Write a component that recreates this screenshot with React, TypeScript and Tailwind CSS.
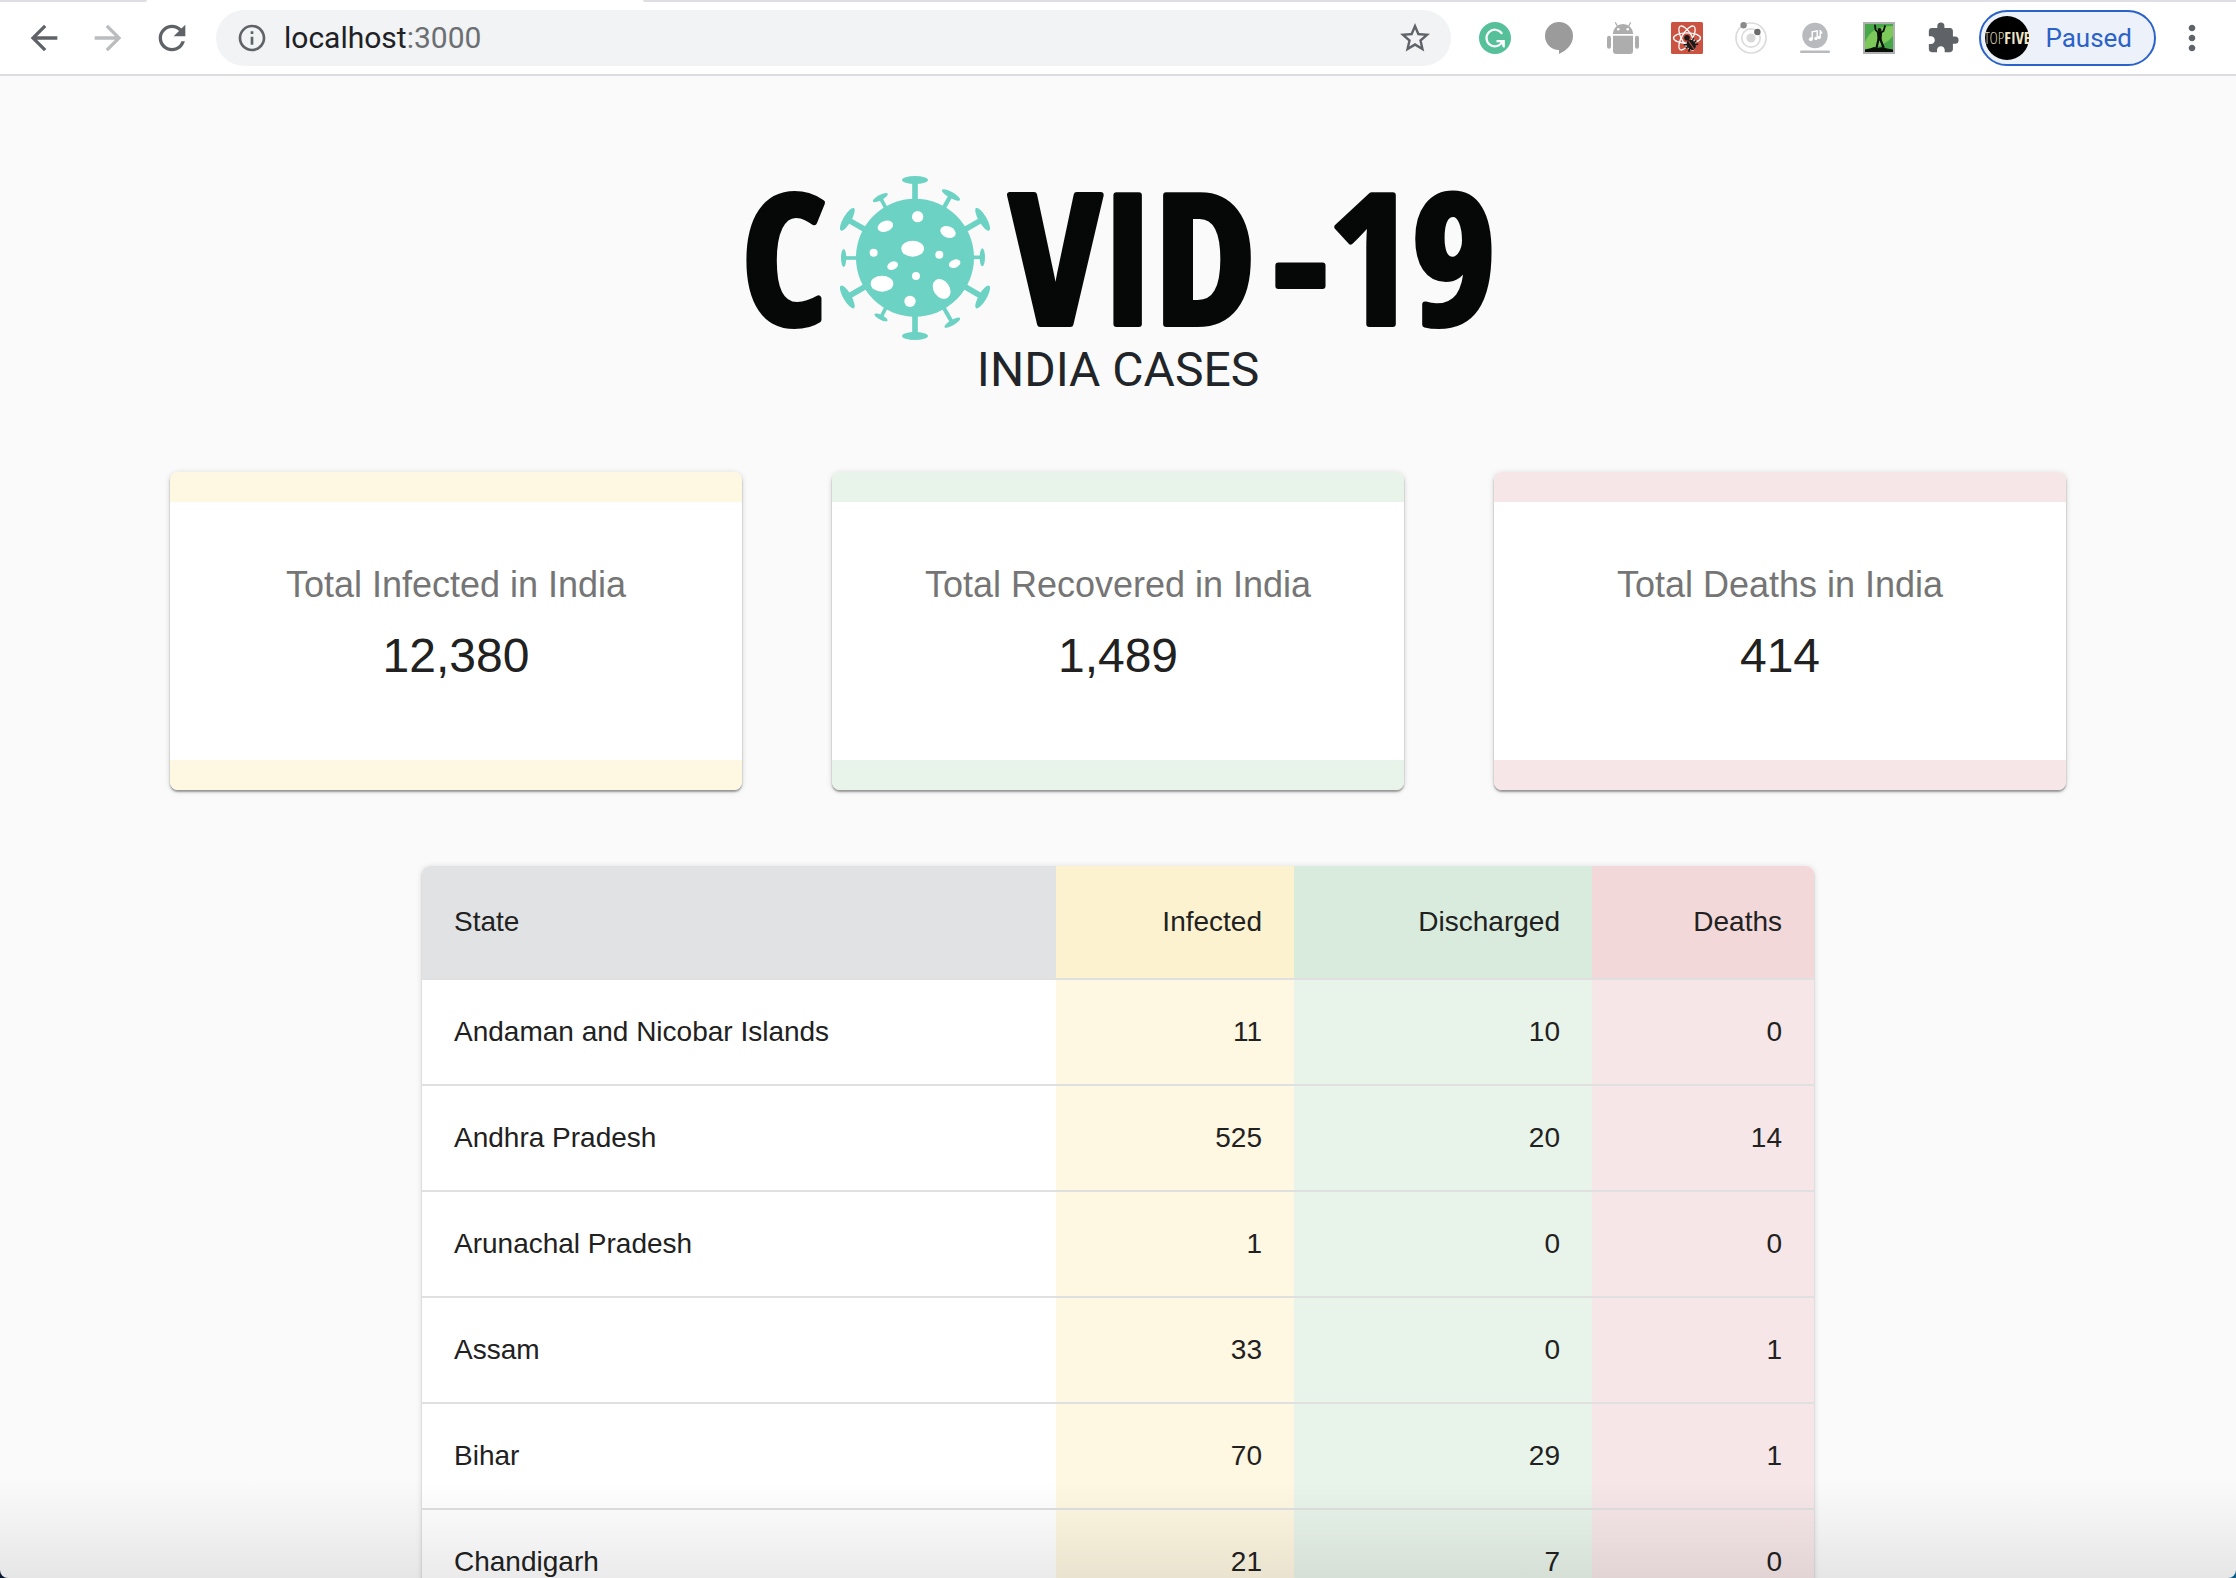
import type { ReactNode } from "react";
import {
  MdArrowBack,
  MdArrowForward,
  MdExtension,
  MdInfoOutline,
  MdMoreVert,
  MdRefresh,
  MdStarBorder,
} from "react-icons/md";

type Tone = { title: string; value: string; bar: string };

const totals: Tone[] = [
  { title: "Total Infected in India", value: "12,380", bar: "bg-[#fef7e1]" },
  { title: "Total Recovered in India", value: "1,489", bar: "bg-[#e8f3e9]" },
  { title: "Total Deaths in India", value: "414", bar: "bg-[#f6e6e7]" },
];

const rows = [
  { state: "Andaman and Nicobar Islands", infected: 11, discharged: 10, deaths: 0 },
  { state: "Andhra Pradesh", infected: 525, discharged: 20, deaths: 14 },
  { state: "Arunachal Pradesh", infected: 1, discharged: 0, deaths: 0 },
  { state: "Assam", infected: 33, discharged: 0, deaths: 1 },
  { state: "Bihar", infected: 70, discharged: 29, deaths: 1 },
  { state: "Chandigarh", infected: 21, discharged: 7, deaths: 0 },
];

function GrammarlyIcon() {
  return (
    <svg viewBox="0 0 32 32" className="size-8">
      <circle cx="16" cy="16" r="16" fill="#56c09a" />
      <path
        d="M22.6 11.2A8.3 8.3 0 1 0 23.4 19.4"
        fill="none"
        stroke="#fff"
        strokeWidth="2.2"
        strokeLinecap="round"
      />
      <path d="M17.5 19.2h7.2v6" fill="none" stroke="#fff" strokeWidth="2.2" />
      <path d="M25.2 18.6v7.4l-3.4-5z" fill="#fff" />
    </svg>
  );
}

function ChatIcon() {
  return (
    <svg viewBox="0 0 32 32" className="size-8">
      <path
        d="M16 0a14 14 0 0 1 14 14c0 8.500-6.500 14.500-14 18v-4A14 14 0 0 1 16 0z"
        fill="#9b9b9b"
      />
    </svg>
  );
}

function AndroidIcon() {
  return (
    <svg viewBox="0 0 32 32" className="size-8" fill="#adadad">
      <path d="M5.800 12a10.200 10 0 0 1 20.400 0z" />
      <path d="M8.500.8l2.200 4M23.500.8l-2.200 4" stroke="#adadad" strokeWidth="1.300" strokeLinecap="round" />
      <circle cx="11.300" cy="7.200" r="1.300" fill="#fff" />
      <circle cx="20.700" cy="7.200" r="1.300" fill="#fff" />
      <path d="M6 13.800h20V29a3 3 0 0 1-3 3H9a3 3 0 0 1-3-3z" />
      <rect x="0" y="13.800" width="4" height="13" rx="2" />
      <rect x="28" y="13.800" width="4" height="13" rx="2" />
    </svg>
  );
}

function ReactBugIcon() {
  return (
    <svg viewBox="0 0 32 32" className="size-8">
      <rect width="32" height="32" rx="1.500" fill="#cb5341" />
      <g fill="none" stroke="#fff" strokeWidth="1.300">
        <ellipse cx="16" cy="16" rx="13.500" ry="5.200" />
        <ellipse cx="16" cy="16" rx="13.500" ry="5.200" transform="rotate(60 16 16)" />
        <ellipse cx="16" cy="16" rx="13.500" ry="5.200" transform="rotate(120 16 16)" />
      </g>
      <circle cx="16" cy="15.800" r="2.800" fill="#1a1a1a" />
      <g transform="rotate(-35 20 22.500)">
        <path d="M14 18.500l12 8M13.500 22.500h13M14 27l12-8.500" stroke="#1a1a1a" strokeWidth="1.500" />
        <ellipse cx="20" cy="23" rx="4.200" ry="5.500" fill="#1a1a1a" />
        <path d="M20 18.500v10" stroke="#cb5341" strokeWidth="1" />
      </g>
    </svg>
  );
}

function OrbitIcon() {
  return (
    <svg viewBox="0 0 32 32" className="size-8">
      <g fill="none" stroke="#dcdcdc">
        <circle cx="16" cy="16" r="15" strokeWidth="1.700" />
        <circle cx="16" cy="16" r="9.200" strokeWidth="1.700" />
      </g>
      <circle cx="16" cy="16" r="4.600" fill="#d9d9d9" />
      <circle cx="8.600" cy="3.200" r="3.200" fill="#8a8a8a" />
      <circle cx="22.400" cy="10" r="3.200" fill="#6b6b6b" />
    </svg>
  );
}

function MusicIcon() {
  return (
    <svg viewBox="0 0 32 32" className="size-8">
      <circle cx="16" cy="13.500" r="12.700" fill="#b9babd" />
      <rect x="1" y="28.500" width="30" height="2.600" rx="1.300" fill="#b9babd" />
      <g fill="none" stroke="#fff" strokeWidth="1.400">
        <path d="M13.200 17.200V9.800l5-1v7.600" />
        <path d="M21.200 15.400V8.200c.3 1.500 1.600 1.700 1.600 3.600" />
      </g>
      <circle cx="11.800" cy="17.200" r="1.900" fill="#fff" />
      <circle cx="16.900" cy="16.400" r="1.700" fill="#fff" />
      <circle cx="20.200" cy="15.400" r="1.600" fill="#fff" />
    </svg>
  );
}

function ClimberIcon() {
  return (
    <svg viewBox="0 0 32 32" className="size-8">
      <rect width="32" height="32" fill="#aeb0b2" />
      <rect x="2" y="2" width="28" height="28" fill="#48a748" />
      <path d="M2 20C6 10 14 4 30 4v10C24 22 14 26 2 27z" fill="#7cc858" />
      <path d="M2 30v-2.500l5-1 4-1.500 3 1 6-1 4 1.500 6 1V30z" fill="#0a0f0a" />
      <circle cx="16.500" cy="8" r="2" fill="#0a0f0a" />
      <path
        d="M12 3.500l.6 4.500 2.400 2.500h3l2.500-1.500 1.500-5"
        fill="none"
        stroke="#0a0f0a"
        strokeWidth="1.800"
        strokeLinejoin="round"
        strokeLinecap="round"
      />
      <path d="M14 9.800h5.200l-.7 8.200h-4z" fill="#0a0f0a" />
      <path d="M15.600 17l-2.200 9M17.200 17l3.400 8.500" fill="none" stroke="#0a0f0a" strokeWidth="2.200" />
    </svg>
  );
}

const extensions: { name: string; icon: ReactNode }[] = [
  { name: "Grammar checker", icon: <GrammarlyIcon /> },
  { name: "Chat", icon: <ChatIcon /> },
  { name: "Android", icon: <AndroidIcon /> },
  { name: "React debugger", icon: <ReactBugIcon /> },
  { name: "Orbit", icon: <OrbitIcon /> },
  { name: "Music", icon: <MusicIcon /> },
  { name: "Climber", icon: <ClimberIcon /> },
  { name: "Extensions", icon: <MdExtension className="size-[34px] shrink-0 text-[#5f6368]" /> },
];

function BrowserBar() {
  return (
    <header className="shrink-0 border-b-2 border-[#dcdce0] bg-white">
      <div className="flex h-0.5">
        <div className="w-[147px] rounded-br-sm bg-[#dfdee4]" />
        <div className="w-[496px]" />
        <div className="flex-1 rounded-bl-sm bg-[#dfdee4]" />
      </div>
      <div className="flex h-[72px] items-center px-6 text-[#5f6368]">
        <nav className="mr-6 flex gap-6">
          <button type="button" aria-label="Back">
            <MdArrowBack className="size-10" />
          </button>
          <button type="button" aria-label="Forward" className="text-[#babcbe]">
            <MdArrowForward className="size-10" />
          </button>
          <button type="button" aria-label="Reload">
            <MdRefresh className="size-10" />
          </button>
        </nav>
        <div className="mr-7 flex h-14 flex-1 items-center rounded-full bg-[#f1f3f4] pr-[18px] pl-5">
          <MdInfoOutline className="size-8" />
          <a
            href="http://localhost:3000"
            className="ml-4 flex-1 font-['Roboto',sans-serif] text-[30px] leading-9 text-[#6b6f73]"
          >
            <span className="text-[#202124]">localhost</span>:3000
          </a>
          <button type="button" aria-label="Bookmark">
            <MdStarBorder className="size-9" />
          </button>
        </div>
        <div className="mr-5 flex items-center gap-8">
          {extensions.map((e) => (
            <button
              key={e.name}
              type="button"
              aria-label={e.name}
              className="flex size-8 items-center justify-center"
            >
              {e.icon}
            </button>
          ))}
        </div>
        <button
          type="button"
          className="mr-4 flex h-14 items-center gap-4 rounded-full border-2 border-[#2b62c9] bg-[#edf2fa] pr-[22px] pl-1 text-[#2b62c9]"
        >
          <span className="flex size-11 items-center justify-center rounded-full bg-black text-[16px] leading-5 text-[#d8cfae]">
            <span className="font-['Open_Sans_Condensed_Light','Open_Sans_Condensed',sans-serif] font-light">
              TOP
            </span>
            <span className="font-['Open_Sans_Condensed',sans-serif] font-bold text-[#efe6c6]">FIVE</span>
          </span>
          <span className="font-['Roboto',sans-serif] text-[26px] leading-8">Paused</span>
        </button>
        <button type="button" aria-label="Menu">
          <MdMoreVert className="size-10" />
        </button>
      </div>
    </header>
  );
}

const spikes: { cx: number; cy: number; rx: number; ry: number; turn: number; w: number }[] = [
  { cx: 555, cy: 60, rx: 39, ry: 12, turn: 0, w: 17 },
  { cx: 663, cy: 105, rx: 31, ry: 9, turn: 29, w: 13 },
  { cx: 758, cy: 178, rx: 39, ry: 12, turn: 60, w: 17 },
  { cx: 757, cy: 292, rx: 27, ry: 8, turn: 90, w: 11 },
  { cx: 758, cy: 411, rx: 39, ry: 12, turn: 120, w: 17 },
  { cx: 667, cy: 488, rx: 27, ry: 8, turn: 150, w: 12 },
  { cx: 555, cy: 528, rx: 39, ry: 12, turn: 180, w: 17 },
  { cx: 453, cy: 472, rx: 22, ry: 7, turn: 207, w: 11 },
  { cx: 352, cy: 411, rx: 39, ry: 12, turn: 240, w: 17 },
  { cx: 341, cy: 294, rx: 27, ry: 8, turn: 270, w: 11 },
  { cx: 352, cy: 178, rx: 39, ry: 12, turn: 300, w: 17 },
  { cx: 451, cy: 113, rx: 25, ry: 8, turn: 332, w: 11 },
];

function Logo() {
  return (
    <svg
      viewBox="0 0 740 164"
      className="h-[164px] w-[740px] overflow-visible"
      role="img"
      aria-label="COVID-19"
    >
      <g
        fill="#060807"
        stroke="#060807"
        strokeWidth="6"
        strokeLinejoin="round"
        className="font-['Open_Sans_Condensed',sans-serif] text-[180px] font-bold"
      >
        <text x="-6" y="148">
          C
        </text>
        <text x="262" y="148">
          VID
        </text>
        <text x="524" y="148">
          -19
        </text>
      </g>
      <g transform="scale(0.3333) translate(-54 -48)" fill="#6cd2c3">
        {spikes.map((s) => (
          <g key={s.turn}>
            <line
              x1={s.cx}
              y1={s.cy}
              x2={s.cx - Math.sin((s.turn * Math.PI) / 180) * 70}
              y2={s.cy + Math.cos((s.turn * Math.PI) / 180) * 70}
              stroke="#6cd2c3"
              strokeWidth={s.w}
            />
            <ellipse
              cx={s.cx}
              cy={s.cy}
              rx={s.rx}
              ry={s.ry}
              transform={`rotate(${s.turn} ${s.cx} ${s.cy})`}
            />
          </g>
        ))}
        <circle cx="555" cy="293" r="177" />
        <g fill="#fff">
          <ellipse cx="466" cy="199" rx="24" ry="16" transform="rotate(-20 466 199)" />
          <circle cx="563" cy="170" r="17" />
          <ellipse cx="654" cy="216" rx="24" ry="17" transform="rotate(22 654 216)" />
          <ellipse cx="548" cy="266" rx="34" ry="24" />
          <circle cx="431" cy="278" r="12" />
          <circle cx="628" cy="284" r="12" />
          <ellipse cx="488" cy="317" rx="17" ry="12" transform="rotate(-25 488 317)" />
          <ellipse cx="674" cy="311" rx="18" ry="12" transform="rotate(-20 674 311)" />
          <circle cx="558" cy="348" r="12" />
          <ellipse cx="456" cy="371" rx="34" ry="24" />
          <ellipse cx="635" cy="387" rx="32" ry="24" transform="rotate(55 635 387)" />
          <circle cx="540" cy="424" r="17" />
        </g>
      </g>
    </svg>
  );
}

function TotalCard({ title, value, bar }: Tone) {
  return (
    <section className="overflow-hidden rounded-lg bg-white text-center shadow-[0_2px_2px_rgba(0,0,0,0.35),0_1px_6px_rgba(0,0,0,0.14)]">
      <div className={`h-[30px] ${bar}`} />
      <div className="px-8 pt-14 pb-[72px]">
        <h2 className="text-[36px] leading-[54px] text-[#757575]">{title}</h2>
        <p className="mt-3 text-[48px] leading-[64px] text-[#212121]">{value}</p>
      </div>
      <div className={`h-[30px] ${bar}`} />
    </section>
  );
}

function StateTable() {
  return (
    <div className="mx-auto max-w-[1392px] overflow-hidden rounded-lg bg-white shadow-[0_2px_2px_rgba(0,0,0,0.2),0_1px_6px_rgba(0,0,0,0.14)]">
      <table className="w-full border-separate border-spacing-0 text-right text-[28px] leading-10 text-[#212121]">
        <thead className="leading-[48px]">
          <tr>
            <th scope="col" className="border-b-2 border-[#e0e0e0] bg-[#e1e2e4] px-8 py-8 text-left font-normal">
              State
            </th>
            <th scope="col" className="w-[238px] border-b-2 border-[#e0e0e0] bg-[#fdf2d0] px-8 py-8 font-normal">
              Infected
            </th>
            <th scope="col" className="w-[298px] border-b-2 border-[#e0e0e0] bg-[#d9ebdc] px-8 py-8 font-normal">
              Discharged
            </th>
            <th scope="col" className="w-[222px] border-b-2 border-[#e0e0e0] bg-[#f3d8da] px-8 py-8 font-normal">
              Deaths
            </th>
          </tr>
        </thead>
        <tbody>
          {rows.map((r) => (
            <tr key={r.state}>
              <th scope="row" className="border-b-2 border-[#e0e0e0] px-8 py-8 text-left font-normal">
                {r.state}
              </th>
              <td className="border-b-2 border-[#e0e0e0] bg-[#fef7e1] px-8 py-8">{r.infected}</td>
              <td className="border-b-2 border-[#e0e0e0] bg-[#e8f3e9] px-8 py-8">{r.discharged}</td>
              <td className="border-b-2 border-[#e0e0e0] bg-[#f6e6e7] px-8 py-8">{r.deaths}</td>
            </tr>
          ))}
        </tbody>
      </table>
    </div>
  );
}

export default function App() {
  return (
    <div className="h-screen bg-linear-to-r from-[#0b1a33] to-[#0b5a86] font-['Liberation_Sans',Arial,sans-serif]">
      <div className="relative flex h-full flex-col overflow-hidden rounded-b-lg bg-[#fafafa]">
        <BrowserBar />
        <main className="min-h-0 flex-1 overflow-hidden px-[170px] pt-[100px]">
          <div className="flex flex-col items-center">
            <Logo />
            <h1 className="font-['Roboto',sans-serif] text-[48px] leading-[60px] text-[#212529]">
              INDIA CASES
            </h1>
          </div>
          <div className="mt-[72px] mb-[76px] grid grid-cols-3 gap-[90px]">
            {totals.map((t) => (
              <TotalCard key={t.title} {...t} />
            ))}
          </div>
          <StateTable />
        </main>
        <div className="pointer-events-none absolute inset-x-0 bottom-0 h-24 bg-linear-to-b from-transparent to-black/8" />
      </div>
    </div>
  );
}
